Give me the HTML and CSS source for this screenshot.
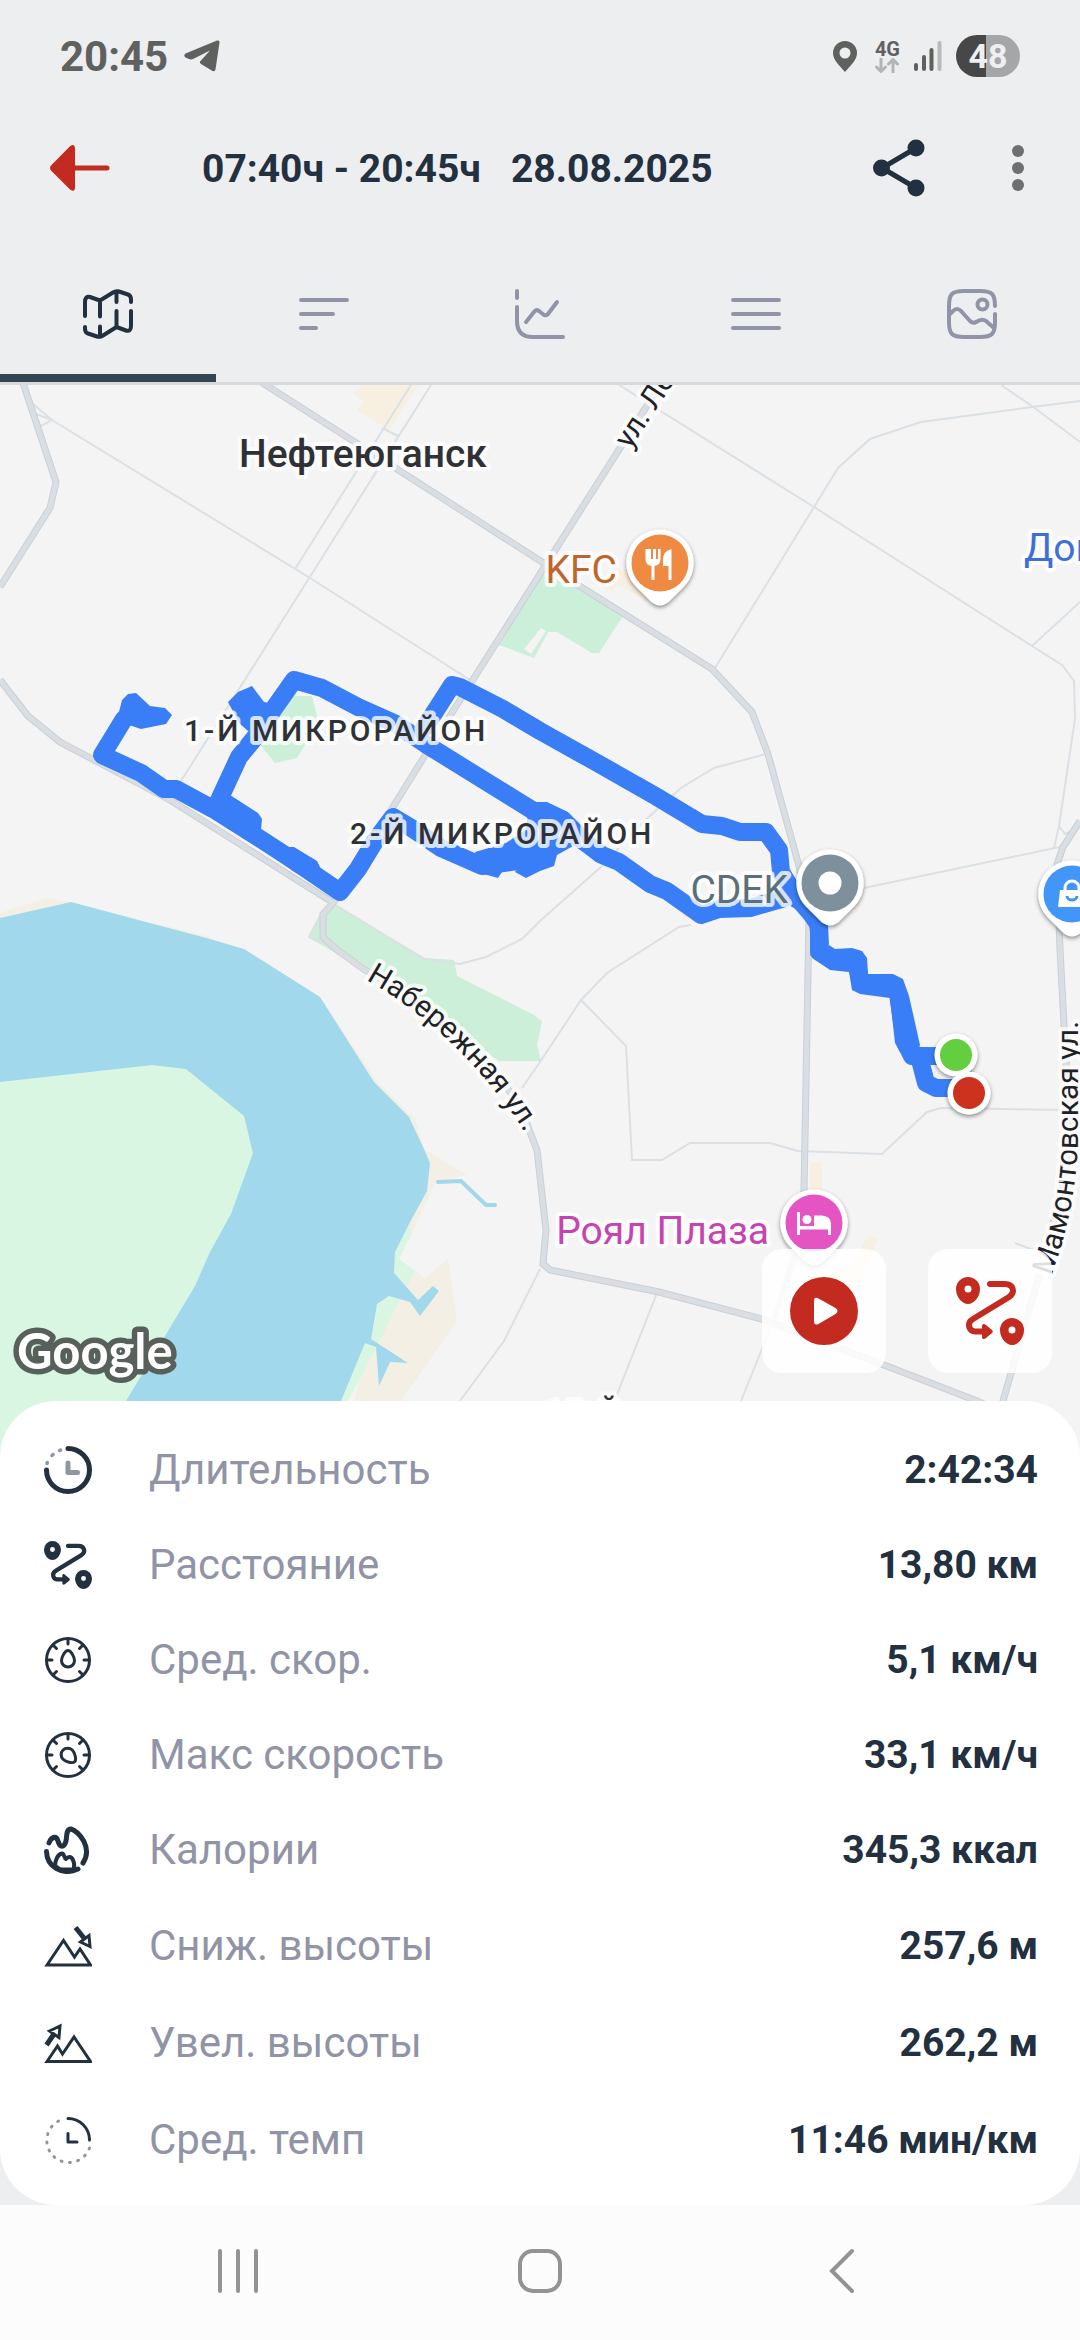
FILE: index.html
```html
<!DOCTYPE html>
<html lang="ru">
<head>
  <meta charset="UTF-8" />
  <meta name="viewport" content="width=device-width, initial-scale=1.0"/>
  <title>Тренировка 28.08.2025</title>
  <link rel="stylesheet" href="styles.css">
</head>
<body>

  <div class="status-bar">
    <span class="clock">20:45</span>
    <svg class="telegram" width="36" height="32" viewBox="0 0 36 32"><path d="M1.500 13.500 33 .6q2.700-.8 2.500 2L31.500 29.500q-.6 2.500-3 1.500L17 24q-2-1.500-.3-3.300L26 10.500 9 19q-2 .8-4 0l-3.500-1.500q-2.500-2 0-4z"/></svg>
    <div class="status-icons">
      <svg width="24" height="31" viewBox="0 0 24 31"><path fill-rule="evenodd" d="M12 0a12 12 0 0 1 12 12c0 7-6 12-12 19C6 24 0 19 0 12A12 12 0 0 1 12 0zm0 6.500a5.500 5.500 0 1 0 0 11 5.500 5.500 0 0 0 0-11z"/></svg>
      <div class="network">
        <span>4G</span>
        <svg width="24" height="15" viewBox="0 0 24 15"><path d="M6 1v12M1.500 9 6 13.500 10.500 9M18 14V2M13.500 6 18 1.500 22.500 6"/></svg>
      </div>
      <svg class="signal" width="28" height="30" viewBox="0 0 28 30"><path d="M2 24v4M10 16v12M17.500 9v19"/><path class="signal-off" d="M25.500 2v26"/></svg>
      <div class="battery">48</div>
    </div>
  </div>

  <header>
    <button class="back" aria-label="Назад">
      <svg width="60" height="46" viewBox="0 0 60 46"><path d="M25 23h32" fill="none" stroke="#c32a20" stroke-width="5" stroke-linecap="round"/><path d="M1 20.500 20 1.200Q25-2 25 4v38q0 6-5 2.500L1 25.500q-2-2.500 0-5z" fill="#c32a20"/></svg>
    </button>
    <h1><span>07:40ч - 20:45ч</span><span>28.08.2025</span></h1>
    <button class="share" aria-label="Поделиться">
      <svg width="52" height="58" viewBox="0 0 52 58"><path d="M43 9 9 29l34 20" fill="none" stroke="#22303f" stroke-width="5"/><g fill="#22303f"><circle cx="8.500" cy="29" r="8.500"/><circle cx="43" cy="9" r="8.500"/><circle cx="43" cy="49" r="8.500"/></g></svg>
    </button>
    <button class="more" aria-label="Ещё">
      <svg width="12" height="46" viewBox="0 0 12 46" fill="#6e6f70"><circle cx="6" cy="6" r="6"/><circle cx="6" cy="23" r="6"/><circle cx="6" cy="40" r="6"/></svg>
    </button>
  </header>

  <nav class="tabs">
    <button class="tab active" aria-label="Карта">
      <svg width="50" height="50" viewBox="0 0 50 50"><path d="M2 27V13q0-6 5-5l10 3.500L30 3.500q3-2 6-1l9 3q3 1 3 5V13M17 12v15.500M33.500 2.500V13M48 22v15q0 6-5 4.500l-9.500-3.500L20 46.500q-3 2-6 1l-9-3q-3-1-3-5V38M33.500 38V22M17 37.500V48"/></svg>
    </button>
    <button class="tab" aria-label="Отрезки">
      <svg width="50" height="50" viewBox="0 0 50 50"><path d="M2 11h46M2 25h32M2 39h15"/></svg>
    </button>
    <button class="tab" aria-label="Графики">
      <svg width="50" height="50" viewBox="0 0 50 50"><path d="M2 2v7M2 18v14q0 16 16 16h30M11 33l8-10q2-3 5-1l5 4q2 1 4-1l9-12"/></svg>
    </button>
    <button class="tab" aria-label="Список">
      <svg width="50" height="50" viewBox="0 0 50 50"><path d="M2 11h46M2 25h46M2 39h46"/></svg>
    </button>
    <button class="tab" aria-label="Фото">
      <svg width="50" height="50" viewBox="0 0 50 50"><path d="M48 17C48 5 45 2 33 2H17C5 2 2 5 2 17v16c0 12 3 15 15 15h16c12 0 15-3 15-15v-8M2 26l4-4q4-4 8 0l9 10q3 3 6 1 6-4 10-1l8 7"/><circle cx="35.500" cy="15.500" r="5"/></svg>
    </button>
  </nav>

  <main>
    <div class="map">
      <svg class="map-canvas" viewBox="0 385 1080 1076" preserveAspectRatio="xMidYMin slice">
        <defs>
          <path id="pin" d="M0-33.500A33.500 33.500 0 0 1 24 23.500L8 39.500Q0 45-8 39.500L-24 23.500A33.500 33.500 0 0 1 0-33.500z"/>
          <path id="road-lenina" d="M630 450 700 342"/>
          <path id="road-naberezhnaya" d="M366 980Q456 1030 522 1128L540 1160"/>
          <path id="road-mamontovskaya" d="M1051 1276Q1078 1205 1078 1130V980"/>
          <filter id="shadow" x="-30%" y="-30%" width="160%" height="160%">
            <feDropShadow dx="0" dy="2" stdDeviation="2" flood-opacity="0.45"/>
          </filter>
        </defs>

        <!-- land, water, parks -->
        <g class="beach">
          <path d="M0 913 46 898 71 902 0 918zM148 921 210 937V941zM320 997 377 1081 415 1119 424 1149 467 1175 435 1183 409 1240 390 1240 400 1160 374 1082z"/>
          <path d="M448 1259 425 1278 415 1271 370 1330 341 1461H360L401 1401 457 1321z"/>
        </g>
        <path class="meadow" d="M409 1222 411 1235 399 1259 415 1271 400 1299 379 1343 348 1401 330 1461H300L380 1240z"/>
        <path class="water" d="M0 918 71 902 210 939 244 949 320 997 374 1082 409 1117 424 1149 430 1163 427 1191 409 1224 395 1252 394 1273 418 1300 433 1286 439 1291 420 1316 410 1302 389 1296 377 1304 371 1339 408 1363 390 1362 379 1386 376 1347 365 1343 341 1401 320 1461H0z"/>
        <path class="meadow" d="M0 1082 152 1065 186 1069 244 1116 253 1153 231 1214 210 1252 195 1286 126 1401 90 1461H0z"/>
        <path d="M438 1182 461 1181 486 1205H495" fill="none" stroke="#a1d8eb" stroke-width="4" stroke-linecap="round"/>
        <g class="park">
          <path d="M334 904 425 958 454 960 457 976 534 1015 542 1021 537 1045 541 1061H499L434 1018 361 968 308 937 320 916z"/>
          <path d="M540 573 574 587 623 616 599 653H592L557 632H548L534 658 499 645z"/>
          <path d="M293 696H312L317 716 305 745 297 758 275 763 258 742 281 714z"/>
        </g>
        <path d="M541 628 524 649 531 654 546 631z" fill="#f4f4f4"/>
        <g class="building">
          <path d="M363 385 353 393 364 401 358 410 389 430 418 385z"/>
          <path d="M592 583 612 591 618 584 647 602V570H621z"/>
          <path d="M810 1162H822V1195H810zM869 1236 877 1240 856 1290 830 1275 850 1265z"/>
        </g>

        <!-- streets -->
        <g class="street">
          <path d="M33 404 52 420 310 578 470 680M36 414 52 420 41 426"/>
          <path d="M411 385 295 569M431 385 181 781M382 428 398 436"/>
          <path d="M619 385 814 507 1032 646 1062 665 1074 681 1075 719 1059 826 1054 848M1059 826 1065 834 1077 829"/>
          <path d="M715 668 838 468 870 439 921 422 1032 407 1080 401M1001 385 1032 406 1080 442M1032 646 1080 602"/>
          <path d="M766 754 714 768 681 788 643 822 602 866 540 921 522 939 486 957 460 964 424 959 334 904"/>
          <path d="M864 888 1060 847M320 916 309 937 336 949"/>
          <path d="M691 925 679 927 607 973 581 1000 540 1062 522 1088"/>
          <path d="M581 1000 626 1046 632 1160H662L690 1143H770L798 1151 882 1154 927 1112 941 1108 1064 1110"/>
          <path d="M657 1293 616 1397M797 1259 774 1319 741 1401M540 1269 504 1341 460 1401M1015 1243 1036 1251"/>
        </g>
        <g class="avenue-edge">
          <path id="avenues" d="M22 380 56 482 50 508 0 587M258 380 581 587 712 669 752 712 768 754 799 866 809 918 804 1192M660 385 540 574 424 757 334 902 323 914V937L336 949 365 970Q480 1030 523 1114L537 1150 546 1230 543 1264 550 1270 659 1292 762 1319 884 1365 977 1401 1030 1425M0 680 28 716 60 742 170 800 332 902M1080 821 1063 847 1057 864 1060 949 1064 1025 1069 1110 1066 1170 1050 1235 1039 1276 1003 1401 990 1440"/>
        </g>
        <use href="#avenues" class="avenue"/>
        <path d="M799 1240 774 1319" class="avenue"/>

        <!-- recorded track -->
        <g class="track">
          <path d="M124 719 102 755 141 773 164 789H176L213 809 262 840 296 862 340 892 358 869 375 841 393 817 413 829 441 848 482 866 540 858"/>
          <path d="M220 798 239 757 257 735 275 707 294 680 322 688 358 707 396 724 427 745 540 815 575 835 602 855 619 862 650 884 667 891 701 915 719 909 750 908 795 895"/>
          <path d="M424 728 436 710 452 685 460 687 503 709 540 731 592 760 657 797 702 824 722 826 740 832H766L779 850 781 872 795 895 812 915 819 925V952L833 961 856 960 861 983 891 985 898 994 905 1042 912 1056H956"/>
          <path d="M920 1060 926 1083 936 1088H969L956 1056"/>
        </g>
        <g class="track-area">
          <path d="M118 716 122 700 128 694 136 693 150 706 165 708 172 715 166 724 141 729 129 725z"/>
          <path d="M228 702 238 692 252 686 264 702 275 704 272 728 248 731 239 723z"/>
          <path d="M210 797 227 793 258 813 262 819 261 830 288 847H294L317 861 322 871 318 885 293 871 253 843 210 814z"/>
          <path d="M475 852 506 843 525 830 530 807 537 802H547L568 812 582 826 602 846 596 862 575 845 557 855 554 866 540 871 526 878 515 872 518 867 506 866 498 878 480 873z"/>
          <path d="M640 777 664 791 670 800 650 800z"/>
          <path d="M781 870 790 870 815 915 828 925 829 945 811 940 808 916 780 900z"/>
          <path d="M829 945 835 949 852 948 862 951 867 958 868 974 893 974 903 979 909 996 920 1045 915 1060 900 1052 895 1043 890 998 860 994 852 990 849 972 830 970 810 955z"/>
        </g>

        <!-- labels -->
        <g class="label">
          <text class="city" x="239" y="467">Нефтеюганск</text>
          <text class="district" x="184" y="741">1-Й МИКРОРАЙОН</text>
          <text class="district" x="350" y="844">2-Й МИКРОРАЙОН</text>
          <text class="district" x="545" y="1422">15-Й</text>
          <text class="road-name"><textPath href="#road-lenina">ул. Ленина</textPath></text>
          <text class="road-name"><textPath href="#road-naberezhnaya">Набережная ул.</textPath></text>
          <text class="road-name"><textPath href="#road-mamontovskaya">Мамонтовская ул.</textPath></text>
          <text class="place" x="617" y="583" text-anchor="end" fill="#c0642b">KFC</text>
          <text class="place" x="788" y="903" text-anchor="end" fill="#5a6f78">CDEK</text>
          <text class="place" x="769" y="1244" text-anchor="end" fill="#c644b0">Роял Плаза</text>
          <text class="place" x="1024" y="561" fill="#3d6fdc">Дом</text>
        </g>

        <!-- place pins -->
        <g transform="translate(660 563)">
          <use href="#pin" fill="#fff" filter="url(#shadow)"/>
          <circle r="28.500" fill="#ee8a42"/>
          <path d="M-14.500-14v10q0 6 6 7V17h3V3q6-1 6-7V-14h-2.500V-4h-2V-14h-3V-4h-2V-14zM11.500-14Q3-12 3-3V3H8.500V17h3z" fill="#fff"/>
        </g>
        <g transform="translate(830 883)">
          <use href="#pin" fill="#fff" filter="url(#shadow)"/>
          <circle r="28.500" fill="#7d909b"/>
          <circle r="11.500" fill="#fff"/>
        </g>
        <g transform="translate(1072 894)">
          <use href="#pin" fill="#fff" filter="url(#shadow)"/>
          <circle r="28.500" fill="#4296f7"/>
          <path d="M-12-4H12L14 13H-14z" fill="#fff"/>
          <path d="M-7-4V-6a7 7 0 0 1 14 0v2" fill="none" stroke="#fff" stroke-width="3"/>
          <path d="M-5 2a5 4 0 0 0 10 0" fill="none" stroke="#4296f7" stroke-width="3"/>
        </g>
        <g transform="translate(814 1223)">
          <use href="#pin" fill="#fff" filter="url(#shadow)"/>
          <circle r="28.500" fill="#e455c3"/>
          <path d="M-17-11h3V3H0V-7.500H8q9 1 9 8V12H14V6.500H-14V12h-3z" fill="#fff"/>
          <circle cx="-7" cy="-3.500" r="4.500" fill="#fff"/>
        </g>
        <g filter="url(#shadow)">
          <circle cx="956" cy="1055" r="21.500" fill="#fff"/>
          <circle cx="969" cy="1093" r="21.500" fill="#fff"/>
        </g>
        <circle cx="956" cy="1055" r="16" fill="#63cf3f"/>
        <circle cx="969" cy="1093" r="16" fill="#cc321e"/>

        <text class="google" x="17" y="1369">Google</text>
      </svg>

      <div class="map-actions">
        <button aria-label="Воспроизвести">
          <svg width="68" height="68" viewBox="0 0 68 68"><circle cx="34" cy="34" r="34" fill="#c32a20"/><path d="M24 24q0-5 4.500-2.500l17 9.500q4 3 0 6l-17 10Q24 49 24 44z" fill="#fff"/></svg>
        </button>
        <button aria-label="Маршрут">
          <svg class="route-icon" width="68" height="68" viewBox="0 0 68 68"><use href="#route"/></svg>
        </button>
      </div>
    </div>

    <dl class="stats">
      <div class="stat">
        <svg viewBox="0 0 48 48"><g stroke-width="5"><path d="M24 2.500A21.500 21.500 0 1 1 2.500 24"/><path stroke="#8e979f" d="M24 17v9.500h9.500"/></g><path stroke="#8e979f" stroke-width="3.500" d="M3 17.500l.4-1M8 9.500l1-1M15.500 4.500l1-.4"/></svg>
        <dt>Длительность</dt>
        <dd>2:42:34</dd>
      </div>
      <div class="stat">
        <svg class="route-icon" viewBox="0 0 68 68">
          <g id="route">
            <path class="fill" fill-rule="evenodd" d="M12 0a12 12 0 0 1 12 12c0 8-6 15-12 15S0 20 0 12A12 12 0 0 1 12 0zm0 8.500a3.500 3.500 0 1 0 0 7 3.500 3.500 0 0 0 0-7zM56 41a12 12 0 0 1 12 12c0 8-6 15-12 15s-12-7-12-15a12 12 0 0 1 12-12zm0 8.500a3.500 3.500 0 1 0 0 7 3.500 3.500 0 0 0 0-7zM26 49c0-2 2-3 4-1l6 5q1.500 1.500 0 3l-6 5c-2 2-4 1-4-1z"/>
            <path class="line" d="M34 7H49c8 0 11 8 4 13L17 42c-7 4-4 12.500 2 12.500h10"/>
          </g>
        </svg>
        <dt>Расстояние</dt>
        <dd>13,80 км</dd>
      </div>
      <div class="stat">
        <svg viewBox="0 0 48 48"><circle cx="24" cy="24" r="21.500"/><path d="M24 3v5M3 24h5M45 24h-5M9 9l3.500 3.500M39 9l-3.500 3.500M9 39l3.500-3.500M39 39l-3.500-3.500"/><path d="M24 14.500c3 0 6.500 6.500 6.500 10a6.500 6.500 0 0 1-13 0c0-3.500 3.500-10 6.500-10z"/></svg>
        <dt>Сред. скор.</dt>
        <dd>5,1 км/ч</dd>
      </div>
      <div class="stat">
        <svg viewBox="0 0 48 48"><circle cx="24" cy="24" r="21.500"/><path d="M24 3v5M3 24h5M45 24h-5M9 9l3.500 3.500M39 9l-3.500 3.500M9 39l3.500-3.500M39 39l-3.500-3.500"/><path transform="rotate(135 24 24)" d="M24 14.500c3 0 6.500 6.500 6.500 10a6.500 6.500 0 0 1-13 0c0-3.500 3.500-10 6.500-10z"/></svg>
        <dt>Макс скорость</dt>
        <dd>33,1 км/ч</dd>
      </div>
      <div class="stat">
        <svg viewBox="0 0 48 48"><g stroke-width="5"><path d="M5 17C7 11 12 9 14 15c2 7 6 7 8 0 1-5 0-12 5-12 8 2 22 19 12 34"/><path d="M2.500 25.500C3 41 18 50 34 43"/><path d="M11 40c0-6 3-12 7-12.500 2.500 0 2 5 4 5.500 2-2.500 5-3 7 1 2 5 1 8 0 9.500H16z" stroke-width="4"/></g></svg>
        <dt>Калории</dt>
        <dd>345,3 ккал</dd>
      </div>
      <div class="stat tall">
        <svg viewBox="0 0 48 48"><path class="sharp" d="M3 43 19.500 18.500 30.500 35 36 27 46.500 43zM36.500 20l8.500-6.500 1 11z"/><path class="sharp" stroke-width="5" d="M31.500 5.500 40 16"/></svg>
        <dt>Сниж. высоты</dt>
        <dd>257,6 м</dd>
      </div>
      <div class="stat tall">
        <svg viewBox="0 0 48 48"><path class="sharp" d="M3 42.500 13.500 27 18.500 35 30 18 46.500 42.500zM5.500 12 16 7l-1 11.500z"/><path class="sharp" stroke-width="5" d="M2.500 26 10 15"/></svg>
        <dt>Увел. высоты</dt>
        <dd>262,2 м</dd>
      </div>
      <div class="stat tall">
        <svg viewBox="0 0 48 48"><path stroke="#8e979f" stroke-dasharray="1 7.400" d="M45.500 32A22 22 0 1 1 20 3"/><path d="M24 2.500A21.500 21.500 0 0 1 45.500 24M24 17.500V26h9"/></svg>
        <dt>Сред. темп</dt>
        <dd>11:46 мин/км</dd>
      </div>
    </dl>
  </main>

  <div class="system-nav">
    <button aria-label="Недавние"><svg width="44" height="46" viewBox="0 0 44 46"><path d="M4 3v40M22 3v40M40 3v40"/></svg></button>
    <button aria-label="Домой"><svg width="44" height="46" viewBox="0 0 44 46"><rect x="2" y="3" width="40" height="40" rx="13"/></svg></button>
    <button aria-label="Назад"><svg width="44" height="46" viewBox="0 0 44 46"><path d="M32 3 12 23l20 20"/></svg></button>
  </div>

</body>
</html>
```

FILE: styles.css
```css
:root {
  --bg-color: #edeef0;
  --dark: #22303f;
  --muted: #9194a6;
  --red: #c32a20;
  --track: #397ef7;
}
* {
  box-sizing: border-box;
}
body {
  margin: 0;
  min-height: 100vh;
  display: flex;
  flex-direction: column;
  font-family: Roboto, sans-serif;
  background-color: var(--bg-color);
  color: var(--dark);
}
svg {
  display: block;
}
button {
  display: flex;
  align-items: center;
  justify-content: center;
  padding: 0;
  border: none;
  background: none;
  cursor: pointer;
}

/* status bar */
.status-bar {
  display: flex;
  align-items: center;
  height: 112px;
  padding: 0 60px;
  color: #5f615f;
  fill: #5f615f;
}
.clock {
  font-size: 42px;
  font-weight: 700;
}
.telegram {
  margin-left: 16px;
}
.status-icons {
  display: flex;
  align-items: center;
  gap: 14px;
  margin-left: auto;
}
.network {
  margin-left: 4px;
  font-size: 20px;
  line-height: 18px;
  font-weight: 700;
}
.network svg {
  fill: none;
  stroke: #b3b4b5;
  stroke-width: 3;
  stroke-linecap: round;
}
.signal {
  stroke: #5f615f;
  stroke-width: 4;
  stroke-linecap: round;
}
.signal-off {
  stroke: #b9babb;
}
.battery {
  width: 64px;
  height: 42px;
  border-radius: 21px;
  background: linear-gradient(90deg, #474747 47%, #a5a6a7 47%);
  color: #eeeff0;
  font-size: 34px;
  line-height: 42px;
  font-weight: 700;
  text-align: center;
}

/* title bar */
header {
  display: flex;
  align-items: center;
  height: 112px;
  padding: 0 56px 0 50px;
}
header h1 {
  display: flex;
  gap: 30px;
  margin: 0 auto 0 92px;
  padding-top: 2px;
  font-size: 39px;
  font-weight: 700;
}
.more {
  margin-left: 87px;
}

.tabs {
  display: flex;
  height: 161px;
  border-bottom: 3px solid #d8d9db;
}
.tab {
  flex: 1;
  padding-top: 30px;
  border-bottom: 8px solid transparent;
}
.tab svg {
  fill: none;
  stroke: var(--muted);
  stroke-width: 4;
  stroke-linecap: round;
  stroke-linejoin: round;
}
.tab.active {
  border-bottom-color: #374553;
}
.tab.active svg {
  stroke: var(--dark);
}

main {
  flex: 1;
  display: flex;
  flex-direction: column;
}

/* map */
.map {
  position: relative;
  flex: 1;
  min-height: 400px;
  background: #f4f4f4;
  overflow: hidden;
}
.map-canvas {
  position: absolute;
  inset: 0;
  width: 100%;
  height: 100%;
}
.water {
  fill: #a1d8eb;
}
.meadow {
  fill: #d9f6e3;
}
.park {
  fill: #cbefd8;
}
.beach {
  fill: #f4efe4;
}
.building {
  fill: #f7efdf;
}
.street {
  fill: none;
  stroke: #dbe0e5;
  stroke-width: 2;
}
.avenue-edge {
  fill: none;
  stroke: #c9d0d6;
  stroke-width: 7;
}
.avenue {
  fill: none;
  stroke: #d9dee3;
  stroke-width: 5;
}
.track {
  fill: none;
  stroke: var(--track);
  stroke-width: 18;
  stroke-linecap: round;
  stroke-linejoin: round;
}
.track-area {
  fill: var(--track);
}
.label {
  paint-order: stroke;
  stroke: rgba(255, 255, 255, 0.8);
  stroke-width: 8px;
  stroke-linejoin: round;
}
.city {
  font-size: 39px;
  font-weight: 500;
  fill: #303136;
}
.district {
  font-size: 30px;
  font-weight: 500;
  letter-spacing: 3px;
  fill: #303136;
}
.road-name {
  font-size: 30px;
  fill: #202124;
}
.place {
  font-size: 39px;
}
.google {
  font-family: Lato, sans-serif;
  font-size: 49px;
  font-weight: 700;
  fill: #fff;
  stroke: #57605a;
  stroke-width: 11px;
  stroke-linejoin: round;
  paint-order: stroke;
}
.map-actions {
  position: absolute;
  right: 28px;
  bottom: 88px;
  display: flex;
  gap: 42px;
}
.map-actions button {
  width: 124px;
  height: 124px;
  border-radius: 20px;
  background: rgba(255, 255, 255, 0.85);
}
.route-icon .fill {
  stroke: none;
}
.route-icon .line {
  fill: none;
}
.map-actions .route-icon {
  fill: var(--red);
  stroke: var(--red);
  stroke-width: 6;
  stroke-linecap: round;
}

/* workout figures */
.stats {
  position: relative;
  margin: -60px 0 0;
  padding: 21px 42px 17px 44px;
  border-radius: 56px;
  background: #fff;
}
.stat {
  display: flex;
  align-items: center;
  height: 95px;
}
.stat.tall {
  height: 97px;
}
.stat svg {
  width: 48px;
  height: 48px;
  fill: none;
  stroke: var(--dark);
  stroke-width: 3;
  stroke-linecap: round;
  stroke-linejoin: round;
}
.stat .route-icon {
  fill: var(--dark);
  stroke-width: 6;
}
.stat .sharp {
  stroke-linecap: butt;
  stroke-linejoin: miter;
}
.stat dt {
  margin-left: 57px;
  font-size: 42px;
  color: var(--muted);
}
.stat dd {
  margin: 0 0 0 auto;
  font-size: 39px;
  font-weight: 700;
}

/* phone navigation */
.system-nav {
  display: grid;
  grid-template-columns: repeat(3, 1fr);
  height: 135px;
  padding: 0 8% 4px;
  background: #fcfcfc;
}
.system-nav svg {
  fill: none;
  stroke: #939393;
  stroke-width: 4;
  stroke-linecap: round;
}
```
